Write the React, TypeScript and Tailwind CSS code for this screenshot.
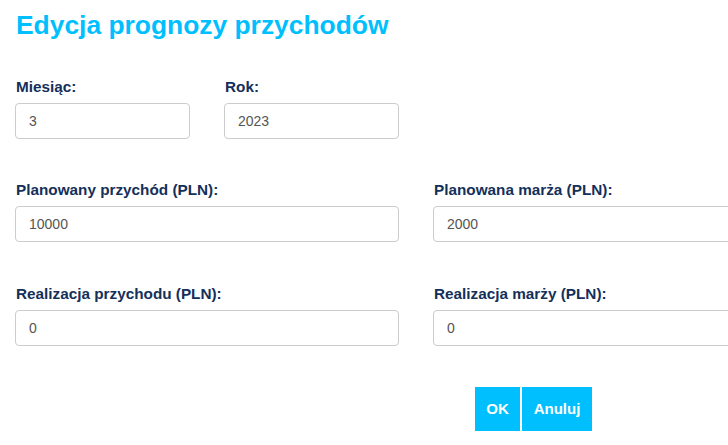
import { useState } from 'react';

interface Field {
  id: string;
  label: string;
  value: string;
  span: 'single' | 'double';
}

const rows: Field[][] = [
  [
    { id: 'month', label: 'Miesiąc:', value: '3', span: 'single' },
    { id: 'year', label: 'Rok:', value: '2023', span: 'single' },
  ],
  [
    { id: 'plannedRevenue', label: 'Planowany przychód (PLN):', value: '10000', span: 'double' },
    { id: 'plannedMargin', label: 'Planowana marża (PLN):', value: '2000', span: 'double' },
  ],
  [
    { id: 'actualRevenue', label: 'Realizacja przychodu (PLN):', value: '0', span: 'double' },
    { id: 'actualMargin', label: 'Realizacja marży (PLN):', value: '0', span: 'double' },
  ],
];

export default function App() {
  const [values, setValues] = useState<Record<string, string>>(() =>
    Object.fromEntries(rows.flat().map((f) => [f.id, f.value]))
  );

  return (
    <div className="w-[728px] h-[445px] overflow-hidden bg-white font-['Liberation_Sans',Arial,sans-serif]">
      <div className="w-[900px] pl-[15px] pt-[10px]">
        <h1 className="text-[26.4px] leading-[30px] font-bold text-[#00bfff] pl-px">
          Edycja prognozy przychodów
        </h1>

        <div className="mt-[36px] flex flex-col">
          {rows.map((row, i) => (
            <div
              key={i}
              className={`grid grid-cols-[175px_175px_175px_175px] gap-x-[34px] ${
                i === 0 ? '' : i === 1 ? 'mt-[40px]' : 'mt-[41px]'
              }`}
            >
              {row.map((field) => (
                <div
                  key={field.id}
                  className={field.span === 'double' ? 'col-span-2 flex flex-col' : 'flex flex-col'}
                >
                  <label
                    htmlFor={field.id}
                    className="text-[15.3px] leading-[21px] font-bold text-[#14305a] pl-px mb-[6px]"
                  >
                    {field.label}
                  </label>
                  <input
                    id={field.id}
                    value={values[field.id]}
                    onChange={(e) => setValues((prev) => ({ ...prev, [field.id]: e.target.value }))}
                    className="h-[36px] w-full border border-[#cccccc] rounded-[4px] px-[13px] text-[14px] text-[#555555] outline-none"
                  />
                </div>
              ))}
            </div>
          ))}
        </div>

        {/* Actions */}
        <div className="mt-[41px] ml-[460px] flex gap-[2px]">
          <button className="w-[45px] h-[44px] bg-[#00bfff] text-white text-[15px] font-bold">
            OK
          </button>
          <button className="w-[70px] h-[44px] bg-[#00bfff] text-white text-[15px] font-bold">
            Anuluj
          </button>
        </div>
      </div>
    </div>
  );
}
